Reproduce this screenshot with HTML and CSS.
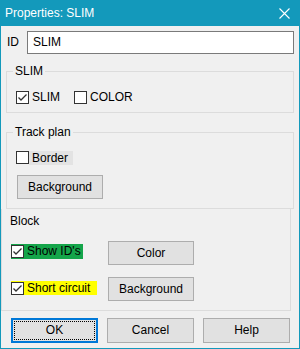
FILE: index.html
```html
<!DOCTYPE html>
<html lang="en">

<head>
    <meta charset="UTF-8">
    <meta name="viewport" content="width=device-width, initial-scale=1.0">
    <link rel="stylesheet" href="styles.css">
    <title>Properties: SLIM</title>
</head>

<body>
    <div class="ventana">
        <div class="titulo">
            <span>Properties: SLIM</span>
            <svg class="cerrar" width="11" height="11" viewBox="0 0 11 11">
                <path d="M0.5 0.5L10.5 10.5M10.5 0.5L0.5 10.5" stroke="#fff" stroke-width="1.1" fill="none" />
            </svg>
        </div>

        <div class="fila-id">
            <label>ID</label>
            <div class="campo">SLIM</div>
        </div>

        <fieldset class="grupo grupo-slim">
            <legend>SLIM</legend>
            <div class="fila-checks">
                <label class="check">
                    <span class="caja"><svg width="11" height="11" viewBox="0 0 11 11"><path d="M1.5 5.5L4 8L9.5 2.5" stroke="#333" stroke-width="1.3" fill="none" /></svg></span>
                    <span>SLIM</span>
                </label>
                <label class="check check-color">
                    <span class="caja"></span>
                    <span>COLOR</span>
                </label>
            </div>
        </fieldset>

        <fieldset class="grupo grupo-track">
            <legend>Track plan</legend>
            <div class="fila-checks">
                <label class="check">
                    <span class="caja caja-pegada"></span>
                    <span class="texto-gris">Border</span>
                </label>
            </div>
            <div class="fila-boton">
                <button class="boton">Background</button>
            </div>
        </fieldset>

        <div class="bloque">
            <div class="bloque-titulo">Block</div>
            <div class="fila-bloque">
                <label class="check verde">
                    <span class="caja"><svg width="11" height="11" viewBox="0 0 11 11"><path d="M1.5 5.5L4 8L9.5 2.5" stroke="#333" stroke-width="1.3" fill="none" /></svg></span>
                    <span>Show ID's</span>
                </label>
                <button class="boton">Color</button>
            </div>
            <div class="fila-bloque">
                <label class="check amarillo">
                    <span class="caja"><svg width="11" height="11" viewBox="0 0 11 11"><path d="M1.5 5.5L4 8L9.5 2.5" stroke="#333" stroke-width="1.3" fill="none" /></svg></span>
                    <span>Short circuit</span>
                </label>
                <button class="boton">Background</button>
            </div>
        </div>

        <div class="acciones">
            <button class="accion accion-ok">OK</button>
            <button class="accion">Cancel</button>
            <button class="accion">Help</button>
        </div>
    </div>
</body>

</html>
```

FILE: styles.css
```css
body {
    margin: 0;
    font-family: "Liberation Sans", Arial, sans-serif;
    font-size: 12px;
    line-height: 15px;
    color: #000;
    background-color: #f0f0f0;
}

.ventana {
    width: 300px;
    height: 349px;
    box-sizing: border-box;
    border: 1px solid #1399bb;
    border-top: none;
    background-color: #f0f0f0;
}

.titulo {
    height: 26px;
    display: flex;
    align-items: center;
    justify-content: space-between;
    padding: 0 9px 0 4px;
    background-color: #1399bb;
    color: white;
}

.fila-id {
    display: flex;
    align-items: center;
    margin-top: 5px;
    padding: 0 5px;
}

.fila-id label {
    flex: 1;
    padding-left: 1px;
}

.campo {
    width: 267px;
    height: 23px;
    box-sizing: border-box;
    border: 1px solid #7a7a7a;
    background-color: white;
    padding-left: 5px;
    line-height: 21px;
}

/* group boxes */
.grupo {
    margin: 10px 5px 0;
    padding: 11px 9px 7px;
    border: 1px solid #dcdcdc;
    min-inline-size: 0;
}

.grupo legend {
    padding: 0 2px;
    margin-left: -3px;
    line-height: 15px;
}

.grupo-track {
    margin-top: 12px;
    padding-top: 10px;
    padding-bottom: 9px;
}

.fila-checks {
    display: flex;
    height: 15px;
}

.fila-boton {
    display: flex;
    margin: 10px 0 0 1px;
}

.check {
    display: flex;
    align-items: center;
    height: 15px;
}

.caja {
    width: 13px;
    height: 13px;
    box-sizing: border-box;
    border: 1px solid #333;
    background-color: white;
    margin-right: 3px;
    display: flex;
}

.check-color {
    margin-left: 14px;
}

.caja-pegada {
    margin-right: 0;
}

.texto-gris {
    background-color: #e3e3e3;
    padding: 0 5px 0 3px;
    height: 14px;
}

.boton {
    width: 86px;
    height: 24px;
    box-sizing: border-box;
    border: 1px solid #adadad;
    background-color: #e1e1e1;
    font: inherit;
    color: #000;
    padding: 0;
}

/* block */
.bloque {
    margin-right: 8px;
    border: 1px solid #dcdcdc;
    border-top: none;
    padding: 5px 0 9px 9px;
}

.bloque-titulo {
    margin-left: -1px;
}

.fila-bloque {
    display: grid;
    grid-template-columns: 97px 86px;
    align-items: start;
    margin-top: 12px;
}

.verde {
    width: 72px;
    margin-top: 3px;
    background-color: #14a54a;
}

.amarillo {
    width: 86px;
    height: 14px;
    margin-top: 4px;
    background-color: #ffff00;
}

.acciones {
    display: flex;
    gap: 9px;
    padding: 7px 0 0 10px;
}

.accion {
    width: 87px;
    height: 25px;
    box-sizing: border-box;
    border: 1px solid #adadad;
    background-color: #e1e1e1;
    font: inherit;
    color: #000;
    padding: 0;
}

.accion-ok {
    border: 2px solid #0078d7;
    outline: 1px dotted #000;
    outline-offset: -4px;
}
```
